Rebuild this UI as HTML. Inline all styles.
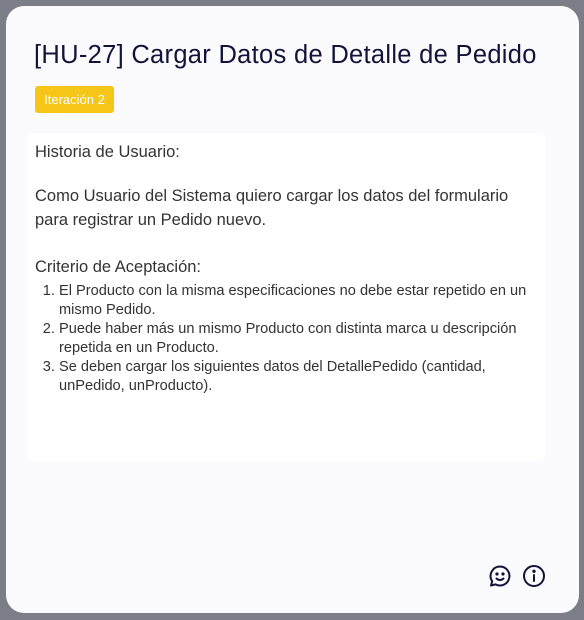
<!DOCTYPE html>
<html><head><style>
html,body{margin:0;padding:0;width:584px;height:620px;background:#7b7e86;overflow:hidden;font-family:"Liberation Sans",sans-serif}
.card{position:absolute;left:6px;top:6px;width:573px;height:607px;background:#fbfbfd;border-radius:18px}
h1{position:absolute;left:28px;top:35px;margin:0;font-weight:400;font-size:25.5px;color:#12123a;letter-spacing:0.3px;white-space:nowrap}
.tag{position:absolute;left:29px;top:80px;height:27px;width:79px;background:#f5c518;border-radius:3px;color:#fff;font-size:13px;line-height:27px;text-align:center}
.body{position:absolute;left:22px;top:127px;width:517px;height:328px;background:#fff;border-radius:6px;color:#333;}
.p{position:absolute;left:7px;font-size:16.5px;white-space:nowrap}
ol{position:absolute;left:7px;top:149px;margin:0;padding-left:24px;font-size:14.6px;line-height:19px;width:490px;white-space:nowrap}
.ic{position:absolute;top:558px}
</style></head><body>
<div class="card">
<h1>[HU-27] Cargar Datos de Detalle de Pedido</h1>
<div class="tag">Iteración 2</div>
<div class="body">
<div class="p" style="top:10px">Historia de Usuario:</div>
<div class="p" style="top:51px;line-height:24px">Como Usuario del Sistema quiero cargar los datos del formulario<br>para registrar un Pedido nuevo.</div>
<div class="p" style="top:125px">Criterio de Aceptación:</div>
<ol>
<li>El Producto con la misma especificaciones no debe estar repetido en un<br>mismo Pedido.</li>
<li>Puede haber más un mismo Producto con distinta marca u descripción<br>repetida en un Producto.</li>
<li>Se deben cargar los siguientes datos del DetallePedido (cantidad,<br>unPedido, unProducto).</li>
</ol>
</div>
<svg class="ic" style="left:482px" width="24" height="24" viewBox="0 0 24 24" fill="none" stroke="#12123a" stroke-width="2" stroke-linecap="round" stroke-linejoin="round"><path d="M12 2.5a9.5 9.5 0 1 1-4.5 17.9L3 21.5l1.2-4.2A9.5 9.5 0 0 1 12 2.5z"/><circle cx="9" cy="10" r=".6" fill="#12123a"/><circle cx="15" cy="10" r=".6" fill="#12123a"/><path d="M8.5 14.5c2 2 5 2 7 0"/></svg>
<svg class="ic" style="left:516px" width="24" height="24" viewBox="0 0 24 24" fill="none" stroke="#12123a" stroke-width="2" stroke-linecap="round"><circle cx="12" cy="12" r="10"/><path d="M12 11v6"/><circle cx="12" cy="7.3" r=".7" fill="#12123a"/></svg>
</div>
</body></html>
